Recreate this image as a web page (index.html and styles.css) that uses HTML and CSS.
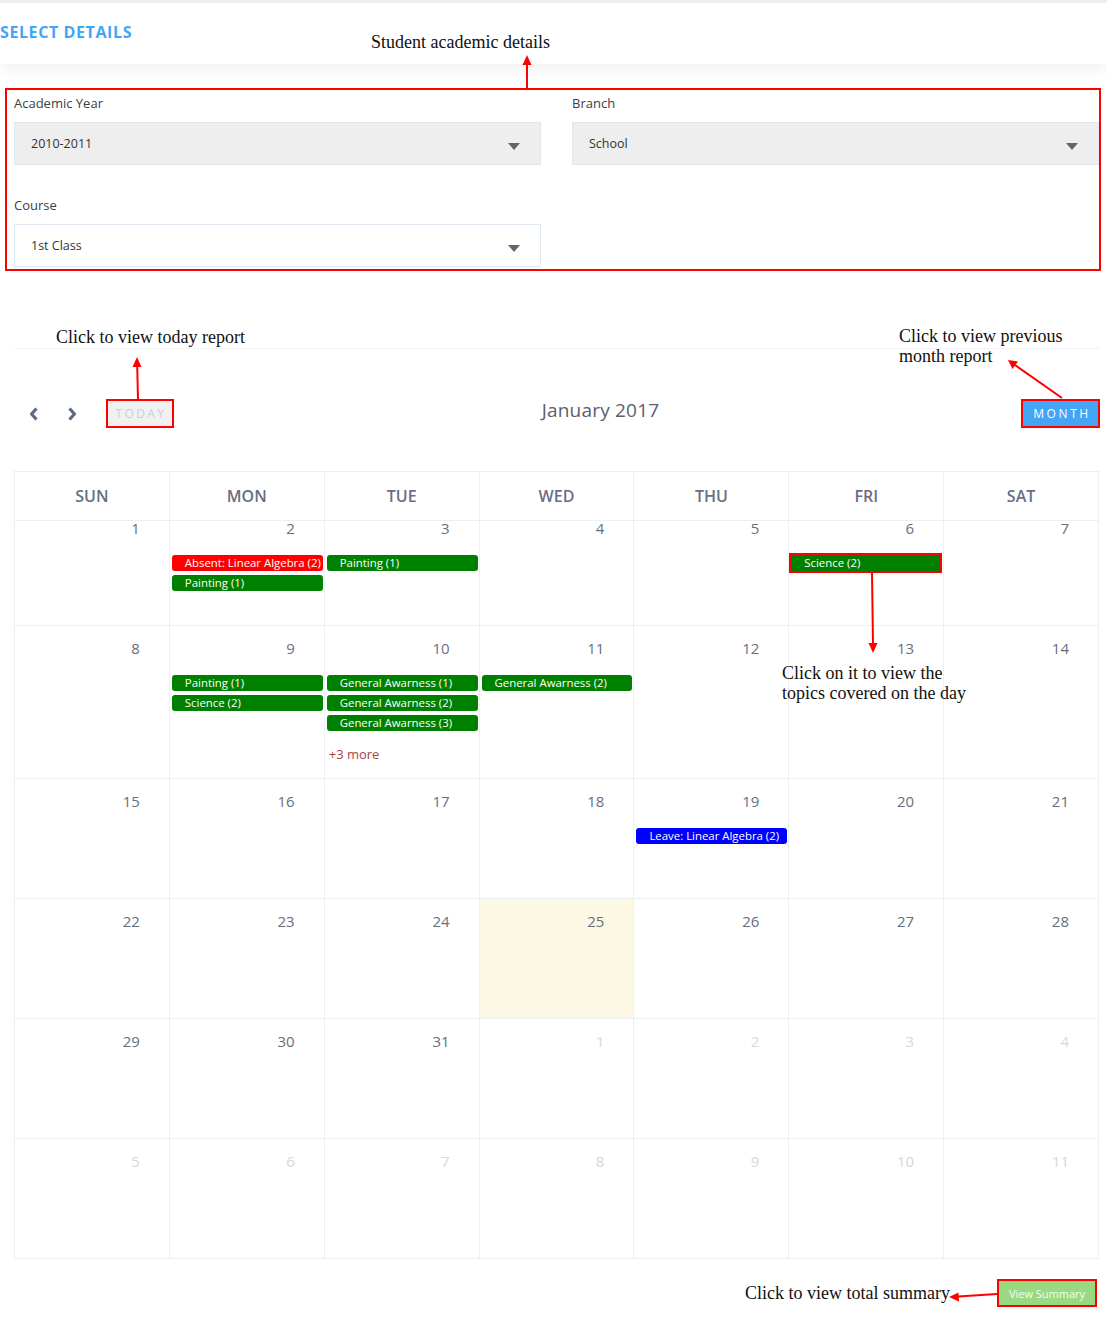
FILE: index.html
```html
<!DOCTYPE html>
<html>
<head>
<meta charset="utf-8">
<link rel="stylesheet" href="styles.css">
</head>
<body>
<div class="topline"></div>
<header class="hdr">
  <h1 class="hdr-title">SELECT DETAILS</h1>
</header>

<section class="filters">
  <div class="field">
    <label>Academic Year</label>
    <div class="select grey"><span>2010-2011</span><i class="caret"></i></div>
  </div>
  <div class="field">
    <label>Branch</label>
    <div class="select grey"><span>School</span><i class="caret"></i></div>
  </div>
  <div class="field">
    <label>Course</label>
    <div class="select"><span>1st Class</span><i class="caret"></i></div>
  </div>
</section>

<section class="cal">
  <div class="cal-rule"></div>
  <div class="toolbar">
    <div class="tb-left">
      <button class="nav" aria-label="prev"><svg width="10" height="14" viewBox="0 0 10 14"><path d="M7.5 1.5 L2.5 7 L7.5 12.5" fill="none" stroke="#5c6b7f" stroke-width="3.2" stroke-linejoin="round"/></svg></button>
      <button class="nav" aria-label="next"><svg width="10" height="14" viewBox="0 0 10 14"><path d="M2.5 1.5 L7.5 7 L2.5 12.5" fill="none" stroke="#5c6b7f" stroke-width="3.2" stroke-linejoin="round"/></svg></button>
      <button class="today">TODAY</button>
    </div>
    <h2 class="title">January 2017</h2>
    <button class="month">MONTH</button>
  </div>

  <div class="grid">
    <div class="dh">SUN</div><div class="dh">MON</div><div class="dh">TUE</div><div class="dh">WED</div><div class="dh">THU</div><div class="dh">FRI</div><div class="dh">SAT</div>

    <div class="day first"><div class="num">1</div></div>
    <div class="day first"><div class="num">2</div><div class="evs"><div class="ev red">Absent: Linear Algebra (2)</div><div class="ev green">Painting (1)</div></div></div>
    <div class="day first"><div class="num">3</div><div class="evs"><div class="ev green">Painting (1)</div></div></div>
    <div class="day first"><div class="num">4</div></div>
    <div class="day first"><div class="num">5</div></div>
    <div class="day first"><div class="num">6</div><div class="evs"><div class="ev green hl">Science (2)</div></div></div>
    <div class="day first"><div class="num">7</div></div>

    <div class="day"><div class="num">8</div></div>
    <div class="day"><div class="num">9</div><div class="evs"><div class="ev green">Painting (1)</div><div class="ev green">Science (2)</div></div></div>
    <div class="day"><div class="num">10</div><div class="evs"><div class="ev green">General Awarness (1)</div><div class="ev green">General Awarness (2)</div><div class="ev green">General Awarness (3)</div><div class="more">+3 more</div></div></div>
    <div class="day"><div class="num">11</div><div class="evs"><div class="ev green">General Awarness (2)</div></div></div>
    <div class="day"><div class="num">12</div></div>
    <div class="day"><div class="num">13</div></div>
    <div class="day"><div class="num">14</div></div>

    <div class="day"><div class="num">15</div></div>
    <div class="day"><div class="num">16</div></div>
    <div class="day"><div class="num">17</div></div>
    <div class="day"><div class="num">18</div></div>
    <div class="day"><div class="num">19</div><div class="evs"><div class="ev blue">Leave: Linear Algebra (2)</div></div></div>
    <div class="day"><div class="num">20</div></div>
    <div class="day"><div class="num">21</div></div>

    <div class="day"><div class="num">22</div></div>
    <div class="day"><div class="num">23</div></div>
    <div class="day"><div class="num">24</div></div>
    <div class="day today-cell"><div class="num">25</div></div>
    <div class="day"><div class="num">26</div></div>
    <div class="day"><div class="num">27</div></div>
    <div class="day"><div class="num">28</div></div>

    <div class="day"><div class="num">29</div></div>
    <div class="day"><div class="num">30</div></div>
    <div class="day"><div class="num">31</div></div>
    <div class="day other"><div class="num">1</div></div>
    <div class="day other"><div class="num">2</div></div>
    <div class="day other"><div class="num">3</div></div>
    <div class="day other"><div class="num">4</div></div>

    <div class="day other"><div class="num">5</div></div>
    <div class="day other"><div class="num">6</div></div>
    <div class="day other"><div class="num">7</div></div>
    <div class="day other"><div class="num">8</div></div>
    <div class="day other"><div class="num">9</div></div>
    <div class="day other"><div class="num">10</div></div>
    <div class="day other"><div class="num">11</div></div>
  </div>
</section>

<div class="foot">
  <button class="summary">View Summary</button>
</div>

<div class="note n1">Student academic details</div>
<div class="note n2">Click to view today report</div>
<div class="note n3">Click to view previous<br>month report</div>
<div class="note n4">Click on it to view the<br>topics covered on the day</div>
<div class="note n5">Click to view total summary</div>

<svg class="arrows" width="1107" height="1317" viewBox="0 0 1107 1317">
  <g stroke="#f00" stroke-width="2" fill="none">
    <line x1="527" y1="88" x2="527" y2="63"/>
    <line x1="138" y1="399" x2="137.2" y2="366"/>
    <line x1="1062" y1="398" x2="1015" y2="365"/>
    <line x1="872" y1="572" x2="873" y2="644"/>
    <line x1="997" y1="1294" x2="958" y2="1296.5"/>
  </g>
  <g fill="#f00">
    <polygon points="527,55 522.5,65 531.5,65"/>
    <polygon points="137,357 132.5,367 141.5,367"/>
    <polygon points="1008,360 1018,361.5 1012.5,369"/>
    <polygon points="873,653 868.5,643 877.5,643"/>
    <polygon points="949,1297 958.5,1292.5 959,1301.5"/>
  </g>
</svg>
</body>
</html>
```

FILE: styles.css
```css
* { box-sizing: border-box; }

body {
  margin: 0;
  position: relative;
  width: 1107px;
  min-height: 1317px;
  background: #fff;
  font-family: "Open Sans", Lato, sans-serif;
  color: #333;
}

.topline { height: 3px; background: #f0f0f0; }

.hdr {
  height: 61px;
  padding-top: 19px;
  background: #fff;
  box-shadow: 0 5px 14px rgba(0, 0, 0, 0.06);
  position: relative;
}

.hdr-title {
  margin: 0;
  font-size: 16px;
  line-height: 20px;
  font-weight: 700;
  color: #42a5f5;
  letter-spacing: 0.6px;
}

.filters {
  margin: 24px 6px 0 5px;
  height: 183px;
  border: 2px solid #f00;
  padding: 5px 0 0 7px;
  display: grid;
  grid-template-columns: 527px 527px;
  column-gap: 31px;
  row-gap: 32px;
  align-content: start;
}

.field label {
  display: block;
  font-size: 13px;
  line-height: 16px;
  color: #3b4049;
  margin-bottom: 11px;
}

.select {
  height: 43px;
  border: 1px solid #dfe7f0;
  display: flex;
  align-items: center;
  justify-content: space-between;
  padding: 0 20px 0 16px;
  font-size: 12.5px;
  color: #333;
  background: #fff;
}
.select.grey { background: #eeeeee; }

.caret {
  width: 0;
  height: 0;
  border-left: 6px solid transparent;
  border-right: 6px solid transparent;
  border-top: 7px solid #5e6670;
  margin-top: 6px;
}

.cal { margin: 77px 8px 0 14px; }
.cal-rule { height: 1px; background: #f1f2f4; }

.toolbar {
  margin-top: 50px;
  height: 30px;
  display: flex;
  align-items: center;
  justify-content: space-between;
}

.tb-left { display: flex; align-items: center; }

.nav {
  width: 16px;
  height: 20px;
  padding: 0;
  border: 0;
  background: none;
  display: flex;
  align-items: center;
  justify-content: center;
  margin-left: 12px;
}
.nav + .nav { margin-left: 22px; }

.today {
  margin-left: 26px;
  width: 68px;
  height: 29px;
  margin-top: -2px;
  border: 2px solid #f00;
  background: #f1f1f1;
  color: #c3d1dc;
  font-family: "Open Sans", sans-serif;
  font-size: 12px;
  letter-spacing: 2.4px;
  padding: 0 0 0 2px;
}

.title {
  margin: 0;
  font-size: 19px;
  font-weight: 400;
  letter-spacing: 0.2px;
  color: #5a606c;
  position: relative;
  top: -4px;
  left: 3px;
}

.month {
  width: 79px;
  height: 29px;
  border: 2px solid #f00;
  background: #42a5f5;
  color: #fff;
  font-family: "Open Sans", sans-serif;
  font-size: 12px;
  letter-spacing: 2.6px;
  padding: 0 0 0 3px;
  margin-top: -1px;
  margin-right: -1px;
}

.grid {
  margin-top: 42px;
  display: grid;
  grid-template-columns: repeat(7, 1fr);
  grid-template-rows: 49px 105px 153px repeat(4, 120px);
  border-top: 1px solid #eceff3;
  border-left: 1px solid #eceff3;
}

.grid > div {
  border-right: 1px solid #eceff3;
  border-bottom: 1px solid #eceff3;
  min-width: 0;
}

.dh {
  display: flex;
  align-items: center;
  justify-content: center;
  font-size: 16px;
  font-weight: 600;
  color: #677081;
  padding-bottom: 1px;
}

.day { padding-top: 13px; }
.day.first { padding-top: 0; }
.day.first .num { margin-top: -2px; }

.num {
  text-align: right;
  padding-right: 29px;
  font-size: 15px;
  line-height: 18px;
  color: #676f7e;
}

.other .num { color: #d4d8de; }
.today-cell { background: #fcf8e3; }

.evs { margin-top: 18px; padding: 0 1px 0 2px; }

.ev {
  height: 16px;
  line-height: 16px;
  font-size: 11.4px;
  color: #fff;
  padding-left: 13px;
  border-radius: 3px;
  margin-bottom: 4px;
  white-space: nowrap;
  overflow: hidden;
}
.ev.green { background: #008000; }
.ev.red { background: #ff0000; }
.ev.blue { background: #0000ff; }
.ev.hl {
  border-radius: 0;
  box-shadow: 0 0 0 2px #f00;
  margin-right: 2px;
}

.more {
  margin-top: 15px;
  padding-left: 2px;
  font-size: 13px;
  line-height: 16px;
  color: #a9443c;
}

.foot {
  display: flex;
  justify-content: flex-end;
  padding: 20px 10px 11px 0;
}

.summary {
  width: 100px;
  height: 28px;
  border: 2px solid #f00;
  background: #98d982;
  color: #f4fff0;
  font-family: "Open Sans", sans-serif;
  font-size: 11px;
  padding: 0;
}

.note {
  position: absolute;
  font-family: "Liberation Serif", serif;
  font-size: 18px;
  line-height: 20px;
  color: #111;
  white-space: nowrap;
}
.n1 { left: 371px; top: 32px; }
.n2 { left: 56px; top: 327px; }
.n3 { left: 899px; top: 326px; }
.n4 { left: 782px; top: 663px; }
.n5 { left: 745px; top: 1283px; }

.arrows {
  position: absolute;
  left: 0;
  top: 0;
  pointer-events: none;
}
```
